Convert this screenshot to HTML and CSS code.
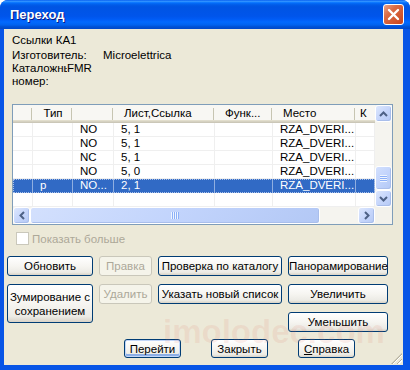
FILE: index.html
```html
<!DOCTYPE html>
<html>

<head>
  <title>Переход</title>
  <link rel="stylesheet" href="styles.css">
</head>

<body>
  <div class="window">
    <div class="titlebar">
      <span class="title">Переход</span>
      <button class="close-btn">
        <svg width="13" height="13" viewBox="0 0 13 13"><path d="M2 2 L11 11 M11 2 L2 11" stroke="#fff" stroke-width="2.4" stroke-linecap="round"/></svg>
      </button>
    </div>

    <div class="client">
      <!-- сведения об элементе -->
      <div class="info">
        <div class="info-head">Ссылки КА1</div>
        <div class="info-row"><span class="info-label">Изготовитель:</span><span>Microelettrica</span></div>
        <div class="info-row"><span class="info-label clipped">Каталожный</span><span>FMR</span></div>
        <div class="info-row"><span class="info-label">номер:</span></div>
      </div>

      <!-- список ссылок -->
      <div class="listview">
        <div class="list-main">
          <div class="lv-row lv-header">
            <div class="cell"></div>
            <div class="cell center">Тип</div>
            <div class="cell"></div>
            <div class="cell">Лист,Ссылка</div>
            <div class="cell">Функ...</div>
            <div class="cell">Место</div>
            <div class="cell last">К</div>
          </div>
          <div class="lv-row">
            <div class="cell"></div><div class="cell"></div><div class="cell">NO</div><div class="cell">5, 1</div><div class="cell"></div><div class="cell">RZA_DVERI...</div><div class="cell"></div>
          </div>
          <div class="lv-row">
            <div class="cell"></div><div class="cell"></div><div class="cell">NO</div><div class="cell">5, 1</div><div class="cell"></div><div class="cell">RZA_DVERI...</div><div class="cell"></div>
          </div>
          <div class="lv-row">
            <div class="cell"></div><div class="cell"></div><div class="cell">NC</div><div class="cell">5, 1</div><div class="cell"></div><div class="cell">RZA_DVERI...</div><div class="cell"></div>
          </div>
          <div class="lv-row">
            <div class="cell"></div><div class="cell"></div><div class="cell">NO</div><div class="cell">5, 0</div><div class="cell"></div><div class="cell">RZA_DVERI...</div><div class="cell"></div>
          </div>
          <div class="lv-row selected">
            <div class="cell"></div><div class="cell">p</div><div class="cell">NO...</div><div class="cell">2, 1</div><div class="cell"></div><div class="cell">RZA_DVERI...</div><div class="cell"></div>
          </div>
          <div class="lv-row">
            <div class="cell"></div><div class="cell"></div><div class="cell"></div><div class="cell"></div><div class="cell"></div><div class="cell"></div><div class="cell"></div>
          </div>
        </div>

        <div class="vscroll">
          <div class="sb-btn">
            <svg width="9" height="6" viewBox="0 0 9 6"><path d="M1 5 L4.5 1.5 L8 5" fill="none" stroke="#4D6185" stroke-width="2"/></svg>
          </div>
          <div class="sb-track v-track1"></div>
          <div class="sb-thumb v-thumb"><span class="grip-h"></span></div>
          <div class="sb-btn">
            <svg width="9" height="6" viewBox="0 0 9 6"><path d="M1 1 L4.5 4.5 L8 1" fill="none" stroke="#4D6185" stroke-width="2"/></svg>
          </div>
        </div>

        <div class="hscroll">
          <div class="sb-btn">
            <svg width="6" height="9" viewBox="0 0 6 9"><path d="M5 1 L1.5 4.5 L5 8" fill="none" stroke="#4D6185" stroke-width="2"/></svg>
          </div>
          <div class="sb-thumb h-thumb"><span class="grip-v"></span></div>
          <div class="sb-track h-track"></div>
          <div class="sb-btn">
            <svg width="6" height="9" viewBox="0 0 6 9"><path d="M1 1 L4.5 4.5 L1 8" fill="none" stroke="#4D6185" stroke-width="2"/></svg>
          </div>
        </div>
        <div class="corner"></div>
      </div>

      <div class="check-row">
        <span class="checkbox"></span>
        <span>Показать больше</span>
      </div>

      <div class="btn-grid">
        <button class="btn">Обновить</button>
        <button class="btn" disabled>Правка</button>
        <button class="btn">Проверка по каталогу</button>
        <button class="btn">Панорамирование</button>
        <button class="btn tall">Зумирование с сохранением</button>
        <button class="btn" disabled>Удалить</button>
        <button class="btn">Указать новый список</button>
        <button class="btn">Увеличить</button>
        <button class="btn col4">Уменьшить</button>
      </div>

      <div class="bottom-row">
        <button class="btn wide default-btn">Перейти</button>
        <button class="btn wide">Закрыть</button>
        <button class="btn wide"><u>С</u>правка</button>
      </div>

      <div class="watermark">imolodec.com</div>
      <div class="grip"></div>
    </div>
  </div>
</body>

</html>
```

FILE: styles.css
```css
body {
  margin: 0;
  background-color: #fff;
  font-family: 'Liberation Sans', Arial, sans-serif;
  font-size: 11.5px;
  color: #000;
}

.window {
  width: 410px;
  height: 370px;
  box-sizing: border-box;
  display: flex;
  flex-direction: column;
  background-color: #0855E6;
  border-radius: 8px 8px 0 0;
  padding: 0 7px 5px 4px;
  overflow: hidden;
}

.titlebar {
  height: 29px;
  flex-shrink: 0;
  display: flex;
  align-items: center;
  margin: 0 -7px 0 -4px;
  padding: 0 6px 0 10px;
  background: linear-gradient(to bottom, #0058EE 0%, #3593FF 4%, #288EFF 6%, #127DFF 8%, #036FFC 10%, #0262EE 14%, #0057E5 20%, #0054E3 24%, #0055EB 56%, #005BF5 66%, #026AFE 76%, #0062EF 86%, #0052D6 92%, #0048C8 100%);
}

.title {
  color: #fff;
  font-weight: bold;
  font-size: 13px;
  text-shadow: 1px 1px #0A1883;
}

.close-btn {
  margin-left: auto;
  width: 21px;
  height: 21px;
  padding: 0;
  border: 1px solid #fff;
  border-radius: 3px;
  background: linear-gradient(135deg, #E9A38A 0%, #DB6B45 35%, #C8441C 100%);
  display: flex;
  align-items: center;
  justify-content: center;
}

.client {
  flex: 1;
  position: relative;
  background-color: #ECE9D8;
}

/* сведения */
.info {
  padding: 5px 0 0 8px;
  line-height: 13px;
}

.info-head {
  margin-bottom: 2px;
}

.info-row {
  display: flex;
  height: 13px;
}

.info-label {
  width: 91px;
  flex-shrink: 0;
  white-space: nowrap;
}

.info-label.clipped {
  width: 55px;
  overflow: hidden;
}

/* список */
.listview {
  margin: 16px 0 0 8px;
  width: 379px;
  display: grid;
  grid-template-columns: 362px 17px;
  grid-template-rows: 102px 17px;
  border: 1px solid #7F9DB9;
  background-color: #fff;
}

.list-main {
  overflow: hidden;
}

.lv-row {
  display: grid;
  grid-template-columns: 20px 40px 41px 101px 58px 83px 19px;
  height: 14px;
  line-height: 13px;
}

.lv-row .cell {
  box-sizing: border-box;
  padding-left: 7px;
  border-right: 1px solid #EFEFEF;
  border-bottom: 1px solid #EFEFEF;
  white-space: nowrap;
  overflow: hidden;
}

.lv-header {
  height: 18px;
  line-height: 17px;
  background-color: #F8F7F3;
  box-shadow: inset 0 -1px #CBC7B8, inset 0 -2px #D6D2C2, inset 0 -3px #E2DECD;
}

.lv-header .cell {
  padding-left: 10px;
  border: none;
  color: #000;
  background: linear-gradient(#C7C5B2, #C7C5B2) right 1px top 3px / 1px 12px no-repeat;
}

.lv-header .cell.center {
  padding-left: 0;
  text-align: center;
}

.lv-header .cell.last {
  padding-left: 4px;
  background: none;
}

.lv-row.selected {
  background-color: #316AC5;
  color: #fff;
  outline: 1px dotted #A9C0E8;
  outline-offset: -1px;
}

.lv-row.selected .cell {
  border-right-color: #8FAEE0;
  border-bottom-color: #316AC5;
}

/* полосы прокрутки */
.vscroll {
  display: flex;
  flex-direction: column;
  background-color: #F5F4EF;
}

.hscroll {
  display: flex;
  background-color: #F5F4EF;
}

.corner {
  background-color: #F3F2EC;
}

.sb-btn {
  width: 17px;
  height: 17px;
  box-sizing: border-box;
  flex-shrink: 0;
  border: 1px solid #fff;
  border-radius: 3px;
  background: linear-gradient(135deg, #DDE7FD 0%, #C6D6FB 50%, #B5C9F5 100%);
  box-shadow: inset -1px -1px #A9BEEB;
  display: flex;
  align-items: center;
  justify-content: center;
}

.sb-thumb {
  box-sizing: border-box;
  border: 1px solid #fff;
  border-radius: 3px;
  background: linear-gradient(135deg, #D3E0FD 0%, #C2D4FC 50%, #B3C8F5 100%);
  box-shadow: inset -1px -1px #A9BEEB;
  display: flex;
  align-items: center;
  justify-content: center;
}

.v-track1 {
  height: 44px;
}

.v-thumb {
  height: 24px;
}

.h-thumb {
  width: 290px;
}

.h-track {
  flex: 1;
}

.grip-h {
  width: 7px;
  height: 7px;
  background: repeating-linear-gradient(to bottom, #EEF4FE 0 1px, #8CB0F8 1px 2px);
}

.grip-v {
  width: 8px;
  height: 7px;
  background: repeating-linear-gradient(to right, #EEF4FE 0 1px, #8CB0F8 1px 2px);
}

/* флажок */
.check-row {
  margin: 7px 0 0 12px;
  display: flex;
  align-items: center;
  gap: 3px;
  height: 13px;
  color: #ACA899;
}

.checkbox {
  width: 13px;
  height: 13px;
  box-sizing: border-box;
  border: 1px solid #CAC8BB;
  background-color: #fff;
}

/* кнопки */
.btn {
  height: 20px;
  margin: 0;
  padding: 0;
  font-family: inherit;
  font-size: 11.5px;
  color: #000;
  border: 1px solid #003C74;
  border-radius: 3px;
  background: linear-gradient(to bottom, #FFFFFF 0%, #F6F5F1 50%, #ECEBE5 85%, #D8D2C6 100%);
  white-space: nowrap;
}

.btn:disabled {
  color: #ACA899;
  border-color: #C9C7BA;
  background: #F5F4EA;
}

.btn-grid {
  margin: 11px 0 0 3px;
  display: grid;
  grid-template-columns: 86px 53px 124px 100px;
  grid-template-rows: 20px 20px 20px;
  column-gap: 6px;
  row-gap: 8px;
}

.btn.tall {
  height: 39px;
  line-height: 14px;
  white-space: normal;
  align-self: start;
}

.btn.col4 {
  grid-column: 4;
}

.bottom-row {
  margin: 7px 0 0 120px;
  display: flex;
  gap: 30px;
}

.btn.wide {
  width: 57px;
  height: 19px;
}

.default-btn {
  box-shadow: inset 0 0 0 1px #C2D6F8, inset 0 -2px 0 1px #8CAEE6;
}

.watermark {
  position: absolute;
  left: 159px;
  top: 286px;
  font-size: 33px;
  line-height: 33px;
  font-weight: bold;
  color: rgba(225, 120, 100, 0.13);
  pointer-events: none;
}

.grip {
  position: absolute;
  right: 1px;
  bottom: 1px;
  width: 11px;
  height: 11px;
  background: repeating-linear-gradient(-45deg, transparent 0 2px, #FFFFFF 2px 3px, #B5B19E 3px 4px);
  clip-path: polygon(100% 0, 100% 100%, 0 100%);
}
```
